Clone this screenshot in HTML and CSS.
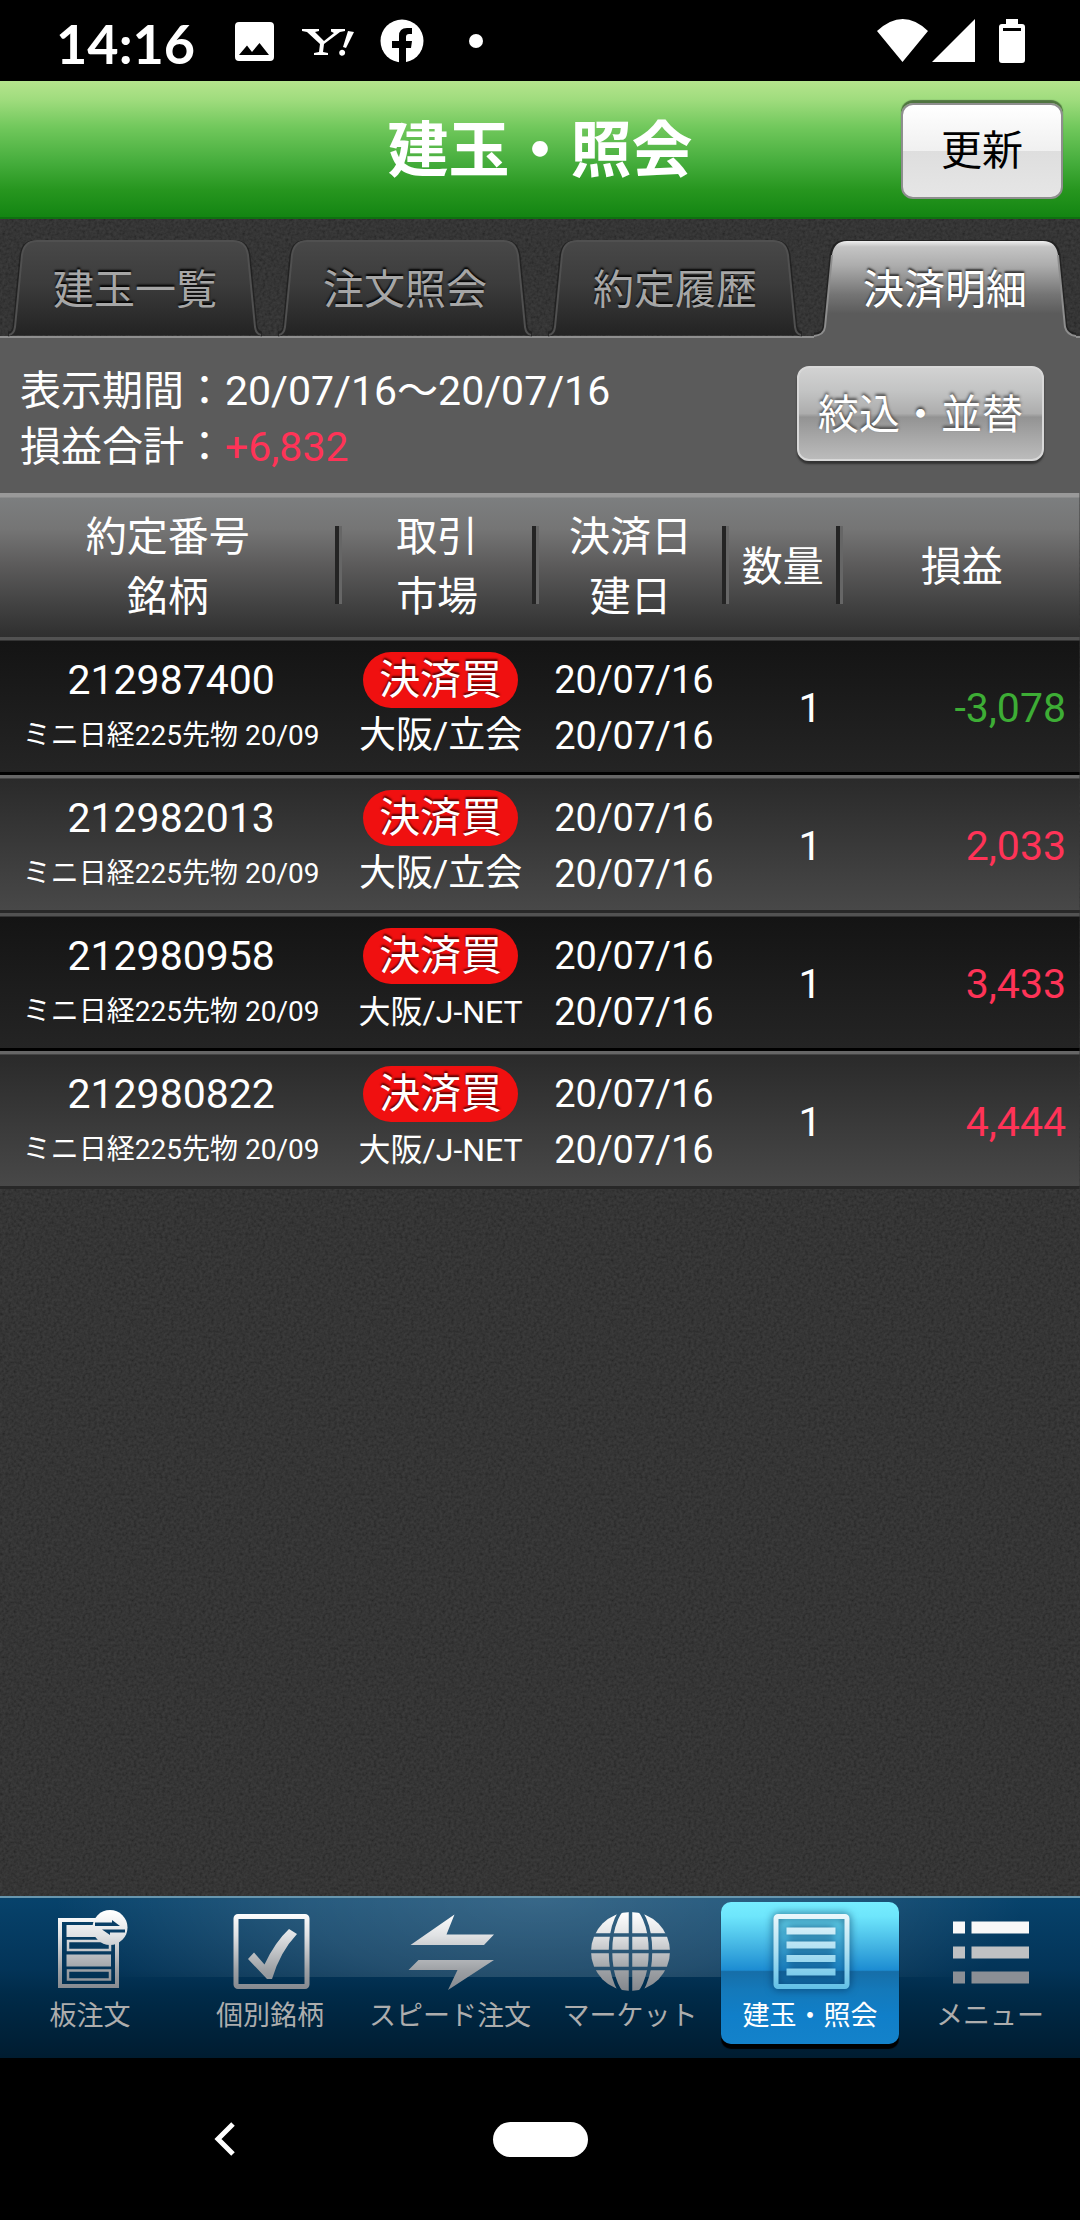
FILE: index.html
```html
<!DOCTYPE html>
<html lang="ja">
<head>
<meta charset="utf-8">
<meta name="viewport" content="width=device-width, initial-scale=1">
<title>建玉・照会</title>
<link rel="stylesheet" href="styles.css">
</head>
<body>
<svg class="defs" aria-hidden="true">
  <defs>
    <linearGradient id="tab-off" x1="0" y1="0" x2="0" y2="1">
      <stop offset="0" stop-color="#484848"/>
      <stop offset="0.45" stop-color="#3c3c3c"/>
      <stop offset="1" stop-color="#232323"/>
    </linearGradient>
    <linearGradient id="tab-on" x1="0" y1="0" x2="0" y2="1">
      <stop offset="0" stop-color="#f0f0f0"/>
      <stop offset="0.06" stop-color="#c4c4c4"/>
      <stop offset="0.25" stop-color="#adadad"/>
      <stop offset="0.55" stop-color="#757575"/>
      <stop offset="0.75" stop-color="#5b5b5b"/>
      <stop offset="1" stop-color="#5b5b5b"/>
    </linearGradient>
    <linearGradient id="metal" gradientUnits="userSpaceOnUse" x1="0" y1="4" x2="0" y2="82">
      <stop offset="0" stop-color="#ffffff"/>
      <stop offset="0.3" stop-color="#e0e2e4"/>
      <stop offset="0.75" stop-color="#9da0a4"/>
      <stop offset="1" stop-color="#84888e"/>
    </linearGradient>
    <linearGradient id="ice" gradientUnits="userSpaceOnUse" x1="0" y1="4" x2="0" y2="82">
      <stop offset="0" stop-color="#eef9fc"/>
      <stop offset="0.5" stop-color="#aee0f2"/>
      <stop offset="1" stop-color="#5fbfe6"/>
    </linearGradient>
  </defs>
</svg>

<div class="status">
  <span class="clock">14:16</span>
  <svg class="status-icons" width="250" height="50" viewBox="0 0 250 50" aria-hidden="true">
    <path fill="#fff" fill-rule="evenodd" d="M5 6h31q4 0 4 4v31q0 4-4 4H5q-4 0-4-4V10q0-4 4-4zM5 39h30l-9.500-12-7.500 9-5-6.500z"/>
    <path fill="#fff" d="M68 13h17v2l-4 1 9 9 10-8-3-1.500V13h14v2l-5 1-16 12-1 8 5 1v2H80v-2l5-1 1-8-13-12-5-1zM114 15l6 1-8 16-3-1zM107 34a3 3 0 1 1-.1 5.500 3 3 0 0 1 .1-5.500z"/>
    <circle cx="168" cy="25" r="21.500" fill="#fff"/>
    <path fill="#000" d="M165 47V32h-7v-7h7v-5q0-8 8-8h5v6h-3q-3 0-3 3v4h6l-1 7h-5v15z"/>
    <circle cx="242" cy="25" r="7" fill="#fff"/>
  </svg>
  <svg class="status-icons right" width="150" height="50" viewBox="0 0 150 50" aria-hidden="true">
    <path fill="#fff" d="M1 15Q27-9 52 15L26.500 46zM56 46L99 3v43zM130 3h12v5h4q3 0 3 3v33q0 3-3 3h-20q-3 0-3-3V11q0-3 3-3h4z"/>
    <path fill="#000" d="M127 12h18v3h-18z"/>
  </svg>
</div>

<header class="titlebar">
  <h1>建玉・照会</h1>
  <button type="button" class="refresh">更新</button>
</header>

<main>
  <div class="tabs" role="tablist">
    <button type="button" role="tab" class="tab" aria-selected="false">
      <svg viewBox="0 0 270 98" preserveAspectRatio="none" aria-hidden="true"><path class="shade" d="M8 94Q14 94 15 87L22 15Q24 2 37 2H233Q246 2 248 15L255 87Q257 94 262 94"/><path class="face" d="M9 95Q14 94 15 87L22 15Q24 1 37 1H233Q246 1 248 15L255 87Q256 94 261 95"/></svg>
      <span>建玉一覧</span>
    </button>
    <button type="button" role="tab" class="tab" aria-selected="false">
      <svg viewBox="0 0 270 98" preserveAspectRatio="none" aria-hidden="true"><path class="shade" d="M8 94Q14 94 15 87L22 15Q24 2 37 2H233Q246 2 248 15L255 87Q257 94 262 94"/><path class="face" d="M9 95Q14 94 15 87L22 15Q24 1 37 1H233Q246 1 248 15L255 87Q256 94 261 95"/></svg>
      <span>注文照会</span>
    </button>
    <button type="button" role="tab" class="tab" aria-selected="false">
      <svg viewBox="0 0 270 98" preserveAspectRatio="none" aria-hidden="true"><path class="shade" d="M8 94Q14 94 15 87L22 15Q24 2 37 2H233Q246 2 248 15L255 87Q257 94 262 94"/><path class="face" d="M9 95Q14 94 15 87L22 15Q24 1 37 1H233Q246 1 248 15L255 87Q256 94 261 95"/></svg>
      <span>約定履歴</span>
    </button>
    <button type="button" role="tab" class="tab on" aria-selected="true">
      <svg viewBox="0 0 270 98" preserveAspectRatio="none" aria-hidden="true"><path class="shade" d="M4 95Q14 95 15 87L22 15Q24 2 37 2H233Q246 2 248 15L255 87Q257 95 266 95"/><path class="face" d="M4 98V96Q14 95 15 87L22 15Q24 1 37 1H233Q246 1 248 15L255 87Q257 95 266 96V98z"/><path class="edge" d="M4 96Q14 95 15 87L22 15M248 15L255 87Q257 95 266 96"/></svg>
      <span>決済明細</span>
    </button>
  </div>

  <section class="summary">
    <div class="totals">
      <p>表示期間：20/07/16～20/07/16</p>
      <p>損益合計：<span class="gain">+6,832</span></p>
    </div>
    <button type="button" class="filter">絞込・並替</button>
  </section>

  <table class="trades">
    <colgroup><col class="c-name"><col class="c-side"><col class="c-date"><col class="c-qty"><col class="c-pl"></colgroup>
    <thead>
      <tr>
        <th scope="col">約定番号<br>銘柄</th>
        <th scope="col">取引<br>市場</th>
        <th scope="col">決済日<br>建日</th>
        <th scope="col">数量</th>
        <th scope="col">損益</th>
      </tr>
    </thead>
    <tbody>
      <tr>
        <td><div class="num">212987400</div><div class="issue">ミニ日経225先物 20/09</div></td>
        <td><div class="side">決済買</div><div class="market">大阪/立会</div></td>
        <td class="date"><div>20/07/16</div><div>20/07/16</div></td>
        <td class="qty">1</td>
        <td class="pl loss">-3,078</td>
      </tr>
      <tr>
        <td><div class="num">212982013</div><div class="issue">ミニ日経225先物 20/09</div></td>
        <td><div class="side">決済買</div><div class="market">大阪/立会</div></td>
        <td class="date"><div>20/07/16</div><div>20/07/16</div></td>
        <td class="qty">1</td>
        <td class="pl gain">2,033</td>
      </tr>
      <tr>
        <td><div class="num">212980958</div><div class="issue">ミニ日経225先物 20/09</div></td>
        <td><div class="side">決済買</div><div class="market small">大阪/J-NET</div></td>
        <td class="date"><div>20/07/16</div><div>20/07/16</div></td>
        <td class="qty">1</td>
        <td class="pl gain">3,433</td>
      </tr>
      <tr>
        <td><div class="num">212980822</div><div class="issue">ミニ日経225先物 20/09</div></td>
        <td><div class="side">決済買</div><div class="market small">大阪/J-NET</div></td>
        <td class="date"><div>20/07/16</div><div>20/07/16</div></td>
        <td class="qty">1</td>
        <td class="pl gain">4,444</td>
      </tr>
    </tbody>
  </table>
</main>

<nav class="menu">
  <a href="#board">
    <svg viewBox="0 0 90 84" aria-hidden="true">
      <path fill="none" stroke="url(#metal)" stroke-width="4" d="M15 12h57v66H15z"/>
      <path fill="url(#metal)" d="M21.500 17H66v12H21.500zM21.500 46.500H66v12H21.500z"/>
      <path fill="none" stroke="url(#metal)" stroke-width="2.500" d="M23 33h42v9H23zM23 62.500h42v9H23z"/>
      <circle cx="65" cy="19.500" r="17.500" fill="url(#metal)"/>
      <path fill="#0a3f66" d="M50 14.500h17V12l8 6H50zM80 21.500H57l8 5.500v-2.500h15z"/>
    </svg>
    <span>板注文</span>
  </a>
  <a href="#symbol">
    <svg viewBox="0 0 90 84" aria-hidden="true">
      <rect x="11" y="8.500" width="71" height="70" rx="2" fill="none" stroke="url(#metal)" stroke-width="5"/>
      <path fill="url(#metal)" d="M23 51L29 44.500 39.500 56.500Q50 34 64 21L72 26Q55 44 47 71H42z"/>
    </svg>
    <span>個別銘柄</span>
  </a>
  <a href="#speed">
    <svg viewBox="0 0 90 84" aria-hidden="true">
      <path fill="url(#metal)" d="M49.500 6.500L5.500 37H79L89 26.500H41.500zM3.500 62L13.500 52H89L43 82L52.500 62z"/>
    </svg>
    <span>スピード注文</span>
  </a>
  <a href="#market">
    <svg viewBox="0 0 90 84" aria-hidden="true">
      <mask id="grid">
        <rect width="90" height="84" fill="#fff"/>
        <g fill="none" stroke="#000" stroke-width="3.500"><path d="M45.500 0V84M0 27H90M0 43.500H90M0 60.500H90"/><ellipse cx="45.500" cy="43.500" rx="20" ry="46"/></g>
      </mask>
      <circle cx="45.500" cy="43.500" r="39.500" fill="url(#metal)" mask="url(#grid)"/>
    </svg>
    <span>マーケット</span>
  </a>
  <a href="#positions" class="on" aria-current="page">
    <svg viewBox="0 0 90 84" aria-hidden="true">
      <rect x="11" y="8.500" width="71" height="70" rx="2" fill="none" stroke="url(#ice)" stroke-width="5"/>
      <path fill="url(#ice)" d="M21.500 19.500h49v7h-49zM21.500 33.500h49v7h-49zM21.500 47h49v7h-49zM21.500 60.500h49v7h-49z"/>
    </svg>
    <span>建玉・照会</span>
  </a>
  <a href="#menu">
    <svg viewBox="0 0 90 84" aria-hidden="true">
      <path fill="#f8f8f8" d="M8 13.500h12v12H8zM26.500 13.500H84v12H26.500z"/>
      <path fill="#bfc1c3" d="M8 38.500h12v12H8zM26.500 38.500H84v12H26.500z"/>
      <path fill="#8b8f95" d="M8 63.500h12v12H8zM26.500 63.500H84v12H26.500z"/>
    </svg>
    <span>メニュー</span>
  </a>
</nav>

<div class="system">
  <button type="button" aria-label="戻る"><svg width="22" height="34" viewBox="0 0 22 34" aria-hidden="true"><path fill="none" stroke="#fff" stroke-width="5" d="M19 2L4 17l15 15"/></svg></button>
  <button type="button" class="home" aria-label="ホーム"></button>
</div>
</body>
</html>
```

FILE: styles.css
```css
* { box-sizing: border-box; }

body {
  margin: 0;
  min-height: 100vh;
  display: flex;
  flex-direction: column;
  background: #000;
  color: #fff;
  font-family: Roboto, "Noto Sans CJK JP", sans-serif;
  font-size: 41px;
  line-height: 56px;
}

button { margin: 0; padding: 0; border: 0; background: none; color: inherit; font: inherit; }
p, h1 { margin: 0; }
.defs { position: absolute; width: 0; height: 0; }

/* device status bar */
.status {
  display: flex;
  align-items: center;
  height: 81px;
  padding: 0 54px 0 56px;
}
.clock { flex: none; width: 178px; padding-top: 6px; font-family: Lato, sans-serif; font-size: 54px; font-weight: 700; }
.status-icons { flex: none; }
.status-icons.right { margin-left: auto; }

/* title */
.titlebar {
  display: grid;
  grid-template-columns: 1fr auto 1fr;
  align-items: center;
  height: 138px;
  padding-top: 4px;
  border-bottom: 2px solid #0f7010;
  background: linear-gradient(#b5e48d, #9fdc7d 14%, #71c85c 34%, #45ad3c 60%, #27961f 80%, #138512);
}
.titlebar h1 { grid-column: 2; font-size: 61px; line-height: 80px; font-weight: 700; }
.refresh {
  justify-self: end;
  width: 162px;
  height: 96px;
  margin-right: 17px;
  border: 2px solid #8e8e8e;
  border-radius: 12px;
  background: linear-gradient(#fff, #f0f0f0 50%, #dedede 50%, #e6e6e6);
  box-shadow: 0 -3px 1px rgba(60, 90, 50, .8);
  color: #000;
}

/* content area with a fine grain */
main {
  flex: 1;
  background-color: #333;
  background-image: url("data:image/svg+xml,%3Csvg xmlns='http://www.w3.org/2000/svg' width='240' height='240'%3E%3Cfilter id='n' x='0' y='0' width='100%25' height='100%25'%3E%3CfeTurbulence type='fractalNoise' baseFrequency='.35' numOctaves='2' stitchTiles='stitch'/%3E%3CfeColorMatrix values='.16 0 0 0 .09 .16 0 0 0 .09 .16 0 0 0 .09 0 0 0 0 1' color-interpolation-filters='sRGB'/%3E%3C/filter%3E%3Crect width='240' height='240' filter='url(%23n)'/%3E%3C/svg%3E");
}

.tabs { display: grid; grid-template-columns: repeat(4, 1fr); padding-top: 21px; }
.tab { position: relative; height: 96px; padding-top: 4px; color: #a6a6a6; text-shadow: 0 -2px 2px #000; }
.tab svg { position: absolute; left: 0; top: 0; width: 100%; height: 98px; }
.tab span { position: relative; }
.tab .shade { fill: none; stroke: #1b1b1b; stroke-opacity: .7; stroke-width: 5; }
.tab .face { fill: url(#tab-off); stroke: #505050; stroke-width: 2; }
.tab.on { color: #fff; text-shadow: 0 -2px 2px #333; }
.tab.on .face { fill: url(#tab-on); stroke: none; }
.tab.on .edge { fill: none; stroke: #8d8d8d; stroke-width: 2; }

.summary {
  display: flex;
  justify-content: space-between;
  align-items: flex-start;
  padding: 25px 36px 18px 20px;
  border-top: 2px solid #8f8f8f;
  background: #5b5b5b;
}
.filter {
  width: 247px;
  height: 95px;
  margin: 3px 0;
  padding-top: 2px;
  border: 2px solid #d8d8d8;
  border-radius: 12px;
  background: linear-gradient(#d2d2d2, #c3c4c4 25%, #adadad 50%, #939393 54%, #a6a6a6 75%, #bbb);
  box-shadow: 0 3px 2px #333;
  text-shadow: 0 -2px 3px #444;
}
.gain { color: #ff3357; }
.loss { color: #3dad35; }

/* trade list */
.trades { width: 100%; table-layout: fixed; border-collapse: collapse; }
.c-name { width: 31.7%; }
.c-side { width: 18.2%; }
.c-date { width: 17.6%; }
.c-qty { width: 10.6%; }
.trades thead tr { background: linear-gradient(#999 4px, #7c7e7f 5px, #757575 25%, #5c5b5b 50%, #444 75%, #2f2f2f); }
.trades th {
  height: 144px;
  padding: 8px 7px 4px 0;
  font-weight: 400;
  line-height: 60px;
  background: linear-gradient(90deg, #242424 4px, #666 4px) right 0 top 33px / 7px 78px no-repeat;
}
.trades th:last-child { padding-right: 0; background: none; }
.trades tbody tr {
  height: 138px;
  background: linear-gradient(#525252 3px, #343434 3px, #343434 4px, #141414 4px, #242424 135px, #000 135px);
}
.trades tbody tr:nth-child(even) {
  background: linear-gradient(#666 3px, #444 3px, #444 4px, #2a2a2a 4px, #484848 135px, #282828 135px);
}
.trades td { padding: 15px 0 11px; text-align: center; white-space: nowrap; }
.issue { font-size: 28px; }
.side { width: 155px; margin: 0 auto; border-radius: 28px; background: #f01010; text-shadow: 0 -2px 2px #500; }
.market { font-size: 37px; }
.market.small { font-size: 32px; }
.date { font-size: 38px; }
.trades td.qty { padding-right: 22px; text-align: right; }
.trades td.pl { padding-right: 14px; text-align: right; }

/* bottom menu */
.menu {
  display: grid;
  grid-template-columns: repeat(6, 1fr);
  height: 162px;
  background:
    linear-gradient(#6796ae, #6796ae) 0 0 / 100% 2px no-repeat,
    radial-gradient(ellipse 45% 220% at 50% 0, rgba(255, 255, 255, .2), rgba(255, 255, 255, .13) 50%, rgba(255, 255, 255, 0)) 0 0 / 100% 81px no-repeat,
    linear-gradient(#07436c, #033458 45%, #002b49 60%, #001c30);
}
.menu a {
  display: flex;
  flex-direction: column;
  align-items: center;
  margin: 6px 1px 14px;
  padding-top: 6px;
  border-radius: 10px;
  color: #adadad;
  font-size: 27px;
  line-height: 48px;
  text-decoration: none;
  white-space: nowrap;
}
.menu svg { flex: none; width: 90px; height: 84px; }
.menu .on {
  color: #fff;
  background: linear-gradient(#76edff, #6ee6fc 10%, #41b2e2 32%, #1c8cd2 48%, #166ea8 49%, #1479ba 62%, #107fc9 80%, #1482ca);
  box-shadow: 0 5px 1px #000;
}
.menu .on svg { filter: drop-shadow(0 0 4px rgba(0, 40, 80, .8)); }

/* device navigation */
.system {
  display: grid;
  grid-template-columns: 449px 1fr 449px;
  align-items: center;
  justify-items: center;
  height: 162px;
}
.system svg { display: block; }
.home { width: 95px; height: 35px; border-radius: 18px; background: #fff; }
```
